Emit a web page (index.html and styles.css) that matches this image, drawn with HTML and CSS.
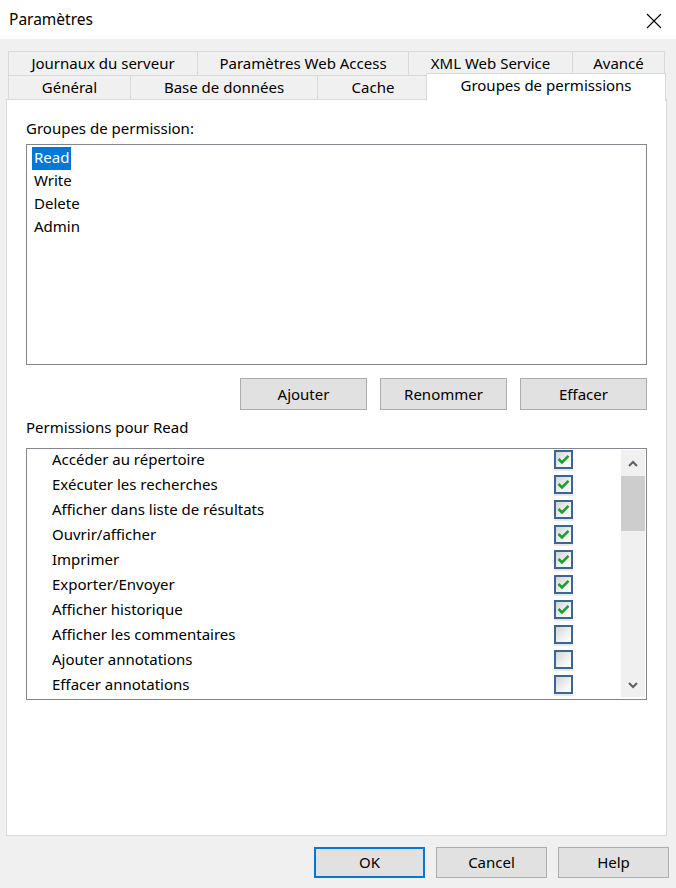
FILE: index.html
```html
<!DOCTYPE html>
<html lang="fr">
<head>
<meta charset="utf-8">
<title>Paramètres</title>
<link rel="stylesheet" href="styles.css">
</head>
<body>
<div class="window">
  <div class="titlebar">
    <span class="title">Paramètres</span>
    <svg class="close" width="16" height="16" viewBox="0 0 16 16"><path d="M1 1 L15 15 M15 1 L1 15" stroke="#000" stroke-width="1.1" fill="none"/></svg>
  </div>
  <div class="body">
    <div class="tabs">
      <div class="tab-row row1">
        <div class="tab t-journaux">Journaux du serveur</div>
        <div class="tab t-web">Paramètres Web Access</div>
        <div class="tab t-xml">XML Web Service</div>
        <div class="tab t-avance">Avancé</div>
      </div>
      <div class="tab-row row2">
        <div class="tab t-general">Général</div>
        <div class="tab t-base">Base de données</div>
        <div class="tab t-cache">Cache</div>
        <div class="tab t-groupes selected">Groupes de permissions</div>
      </div>
    </div>
    <div class="panel">
      <div class="label">Groupes de permission:</div>
      <div class="listbox">
        <div class="item"><span class="sel">Read</span></div>
        <div class="item"><span>Write</span></div>
        <div class="item"><span>Delete</span></div>
        <div class="item"><span>Admin</span></div>
      </div>
      <div class="btn-row">
        <button class="btn">Ajouter</button>
        <button class="btn">Renommer</button>
        <button class="btn">Effacer</button>
      </div>
      <div class="label label2">Permissions pour Read</div>
      <div class="permlist">
        <div class="rows">
          <div class="row"><span class="txt">Accéder au répertoire</span><span class="cb on"><svg viewBox="0 0 15 15"><polyline points="2.5,7 6,10.5 12.5,3.8"/></svg></span></div>
          <div class="row"><span class="txt">Exécuter les recherches</span><span class="cb on"><svg viewBox="0 0 15 15"><polyline points="2.5,7 6,10.5 12.5,3.8"/></svg></span></div>
          <div class="row"><span class="txt">Afficher dans liste de résultats</span><span class="cb on"><svg viewBox="0 0 15 15"><polyline points="2.5,7 6,10.5 12.5,3.8"/></svg></span></div>
          <div class="row"><span class="txt">Ouvrir/afficher</span><span class="cb on"><svg viewBox="0 0 15 15"><polyline points="2.5,7 6,10.5 12.5,3.8"/></svg></span></div>
          <div class="row"><span class="txt">Imprimer</span><span class="cb on"><svg viewBox="0 0 15 15"><polyline points="2.5,7 6,10.5 12.5,3.8"/></svg></span></div>
          <div class="row"><span class="txt">Exporter/Envoyer</span><span class="cb on"><svg viewBox="0 0 15 15"><polyline points="2.5,7 6,10.5 12.5,3.8"/></svg></span></div>
          <div class="row"><span class="txt">Afficher historique</span><span class="cb on"><svg viewBox="0 0 15 15"><polyline points="2.5,7 6,10.5 12.5,3.8"/></svg></span></div>
          <div class="row"><span class="txt">Afficher les commentaires</span><span class="cb"></span></div>
          <div class="row"><span class="txt">Ajouter annotations</span><span class="cb"></span></div>
          <div class="row"><span class="txt">Effacer annotations</span><span class="cb"></span></div>
        </div>
        <div class="scrollbar">
          <div class="arrow up"><svg width="10" height="7" viewBox="0 0 10 7"><polyline points="1,6 5,2 9,6"/></svg></div>
          <div class="thumb"></div>
          <div class="track"></div>
          <div class="arrow down"><svg width="10" height="7" viewBox="0 0 10 7"><polyline points="1,1 5,5 9,1"/></svg></div>
        </div>
      </div>
    </div>
    <div class="footer">
      <button class="btn fbtn default">OK</button>
      <button class="btn fbtn">Cancel</button>
      <button class="btn fbtn">Help</button>
    </div>
  </div>
</div>
</body>
</html>
```
FILE: styles.css
```css
* { box-sizing: border-box; }
html, body { margin: 0; padding: 0; }
body {
  width: 676px;
  height: 888px;
  background: #f0f0f0;
  font-family: "Noto Sans", "Open Sans", sans-serif;
  font-size: 15px;
  color: #000;
  overflow: hidden;
}
.window { width: 676px; height: 888px; display: flex; flex-direction: column; }
.titlebar {
  height: 39px;
  background: #fff;
  display: flex;
  align-items: center;
  justify-content: space-between;
  padding: 0 14px 0 9px;
}
.title { font-size: 15.5px; line-height: 20px; margin-top: -1px; }
.close { display: block; margin-top: 2px; }
.body { padding: 12px 0 0 6px; flex: 1; display: flex; flex-direction: column; }
.tabs { padding-left: 2px; }
.tab-row { display: flex; height: 24px; }
.tab {
  height: 25px;
  border: 1px solid #d9d9d9;
  border-bottom: none;
  margin-right: -1px;
  background: #f0f0f0;
  display: flex;
  align-items: center;
  justify-content: center;
  line-height: 20px;
  padding-bottom: 2px;
  white-space: nowrap;
}
.t-journaux { width: 190px; }
.t-web { width: 212px; }
.t-xml { width: 165px; }
.t-avance { width: 93px; }
.t-general { width: 123px; }
.t-base { width: 188px; }
.t-cache { width: 112px; }
.tab.selected {
  width: 240px;
  height: 28px;
  margin-top: -2px;
  margin-left: -2px;
  padding-bottom: 5px;
  background: #fff;
  position: relative;
  z-index: 1;
}
.panel {
  width: 661px;
  height: 737px;
  background: #fff;
  border: 1px solid #d9d9d9;
  padding: 18px 19px 0 19px;
}
.label { line-height: 20px; height: 20px; }
.listbox {
  margin-top: 6px;
  height: 221px;
  border: 1px solid #828790;
  padding-top: 2px;
}
.item { line-height: 23px; height: 23px; padding-left: 5px; }
.item span { display: inline-block; padding: 0 2px 2px; line-height: 21px; vertical-align: top; }
.item .sel { background: #0078d7; color: #fff; }
.btn-row { margin-top: 13px; display: flex; justify-content: flex-end; gap: 13px; }
.btn {
  font-family: inherit;
  font-size: 15px;
  color: #000;
  background: #e1e1e1;
  border: 1px solid #adadad;
  width: 127px;
  height: 32px;
  padding: 0 0 1px;
  line-height: 20px;
}
.label2 { margin-top: 7px; }
.permlist {
  margin-top: 11px;
  height: 252px;
  border: 1px solid #828790;
  display: flex;
}
.rows { flex: 1; }
.row {
  height: 25px;
  display: flex;
  align-items: flex-start;
  padding-left: 25px;
  padding-right: 48px;
}
.txt { flex: 1; line-height: 21px; }
.cb {
  width: 19px;
  height: 19px;
  margin-top: 1px;
  border: 2px solid #3c6591;
  background: linear-gradient(135deg, #d4d4d4 0%, #f2f2f2 60%, #ffffff 100%);
  box-shadow: 0 2px 0 #e8e8e8;
  display: block;
}
.cb svg { display: block; width: 15px; height: 15px; }
.cb polyline { fill: none; stroke: #1d9f2f; stroke-width: 2.6; stroke-linecap: butt; }
.scrollbar {
  width: 24px;
  margin: 1px 1px 2px 0;
  background: #f0f0f0;
  display: flex;
  flex-direction: column;
}
.arrow { display: flex; align-items: center; justify-content: center; }
.arrow.up { height: 26px; }
.arrow.down { height: 24px; }
.arrow polyline { fill: none; stroke: #606060; stroke-width: 2; }
.thumb { height: 55px; background: #cdcdcd; }
.track { flex: 1; }
.footer {
  padding: 11px 7px 0 0;
  display: flex;
  justify-content: flex-end;
  gap: 11px;
}
.fbtn { width: 111px; height: 31px; }
.fbtn.default { border: 2px solid #0078d7; }
```
